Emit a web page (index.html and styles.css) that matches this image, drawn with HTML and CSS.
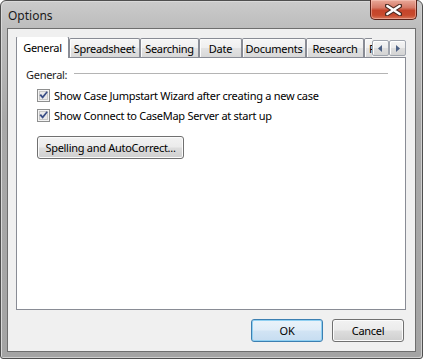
FILE: index.html
```html
<!DOCTYPE html>
<html>
<head>
<meta charset="utf-8">
<title>Options</title>
<link rel="stylesheet" href="styles.css">
</head>
<body>
<div class="window">
  <div class="titlebar">
    <span class="title">Options</span>
    <div class="close">
      <svg width="17" height="12" viewBox="0 0 17 12">
        <path d="M2 1.8 L15 10.2 M15 1.8 L2 10.2" stroke="#4a2a22" stroke-width="4.4" stroke-linecap="round" fill="none"/>
        <path d="M2.3 2 L14.7 10 M14.7 2 L2.3 10" stroke="#ffffff" stroke-width="2.4" stroke-linecap="round" fill="none"/>
      </svg>
    </div>
  </div>
  <div class="client">
    <div class="tabrow">
      <div class="strip">
        <div class="tab selected t-general">General</div>
        <div class="tab t-spread">Spreadsheet</div>
        <div class="tab t-search">Searching</div>
        <div class="tab t-date">Date</div>
        <div class="tab t-docs">Documents</div>
        <div class="tab t-research">Research</div>
        <div class="tab t-f">F</div>
      </div>
      <div class="scroller">
        <div class="sbtn">
          <svg width="5" height="7" viewBox="0 0 5 7"><path d="M4 0 L0 3.5 L4 7 Z" fill="#4d6185"/></svg>
        </div>
        <div class="sbtn">
          <svg width="5" height="7" viewBox="0 0 5 7"><path d="M1 0 L5 3.5 L1 7 Z" fill="#4d6185"/></svg>
        </div>
      </div>
    </div>
    <div class="panel">
      <div class="group">
        <span class="group-label">General:</span>
        <div class="rule"></div>
      </div>
      <div class="check first">
        <svg class="box" width="13" height="13" viewBox="0 0 13 13">
          <rect x="0.5" y="0.5" width="12" height="12" fill="#f4f4f4" stroke="#8e8f8f"/>
          <rect x="2.5" y="2.5" width="8" height="8" fill="#e9e9e9" stroke="#c8c8c8"/>
          <path d="M2.5 6.2 L4 5 L5.6 7 L9.6 2.2 L10.8 3.2 L5.7 9.8 Z" fill="#3a4e86"/>
        </svg>
        <span>Show Case Jumpstart Wizard after creating a new case</span>
      </div>
      <div class="check">
        <svg class="box" width="13" height="13" viewBox="0 0 13 13">
          <rect x="0.5" y="0.5" width="12" height="12" fill="#f4f4f4" stroke="#8e8f8f"/>
          <rect x="2.5" y="2.5" width="8" height="8" fill="#e9e9e9" stroke="#c8c8c8"/>
          <path d="M2.5 6.2 L4 5 L5.6 7 L9.6 2.2 L10.8 3.2 L5.7 9.8 Z" fill="#3a4e86"/>
        </svg>
        <span>Show Connect to CaseMap Server at start up</span>
      </div>
      <div class="btn spelling">Spelling and AutoCorrect...</div>
    </div>
    <div class="footer">
      <div class="btn default">OK</div>
      <div class="btn">Cancel</div>
    </div>
  </div>
</div>
</body>
</html>
```
FILE: styles.css
```css
* { box-sizing: border-box; }
html, body { margin: 0; padding: 0; background: #ffffff; }
body {
  font-family: "Noto Sans", "Open Sans", "DejaVu Sans", sans-serif;
  font-size: 11px;
  letter-spacing: -0.28px;
  color: #000;
}
.window {
  width: 423px;
  height: 359px;
  border: 1px solid #4f4f4f;
  border-radius: 6px 6px 3px 3px;
  background: linear-gradient(to bottom, #cbcbcb 0px, #bcbcbc 28px, #a9a9a9 120px, #a4a4a4 100%);
  box-shadow: inset 1px 1px 0 #d9d9d9, inset -1px -1px 0 #d0d0d0;
  padding: 0 6px 6px 6px;
  display: flex;
  flex-direction: column;
}
.titlebar {
  height: 27px;
  flex: 0 0 27px;
  display: flex;
  justify-content: space-between;
  align-items: flex-start;
}
.title {
  font-size: 12px;
  letter-spacing: 0;
  color: #1a1a1a;
  margin-top: 6px;
  margin-left: 1px;
}
.close {
  width: 47px;
  height: 20px;
  margin-top: -1px;
  margin-right: -1px;
  border: 1px solid #5b2219;
  border-top: none;
  border-radius: 0 0 5px 5px;
  background: linear-gradient(to bottom, #e9a999 0%, #d67a67 40%, #c5452b 55%, #c84a2d 80%, #d9785c 100%);
  box-shadow: inset 0 0 0 1px rgba(255,210,200,0.45);
  display: flex;
  align-items: center;
  justify-content: center;
}
.client {
  flex: 1;
  background: #f0f0f0;
  border: 1px solid #6e6e6e;
  padding: 8px 9px 0 8px;
  display: flex;
  flex-direction: column;
}
.tabrow {
  display: flex;
  height: 21px;
  flex: 0 0 21px;
  position: relative;
  z-index: 2;
  margin-bottom: -1px;
}
.strip {
  width: 356px;
  flex: 0 0 356px;
  display: flex;
  align-items: flex-end;
  overflow: hidden;
}
.tab {
  flex: 0 0 auto;
  height: 19px;
  border: 1px solid #898c95;
  border-bottom: none;
  border-radius: 2px 2px 0 0;
  background: linear-gradient(to bottom, #f6f6f6 0%, #efefef 50%, #e3e3e3 51%, #d8d8d8 100%);
  box-shadow: inset 1px 1px 0 #fcfcfc;
  text-align: center;
  line-height: 20px;
  white-space: nowrap;
  margin-bottom: 1px;
}
.tab.selected {
  height: 22px;
  background: #ffffff;
  box-shadow: none;
  line-height: 22px;
  margin-bottom: 0;
}
.t-general { width: 53px; }
.t-spread { width: 71px; }
.t-search { width: 59px; }
.t-date { width: 43px; }
.t-docs { width: 64px; }
.t-research { width: 58px; }
.t-f { width: 40px; text-align: left; padding-left: 4px; }
.scroller {
  display: flex;
  align-items: flex-start;
  padding-top: 3px;
}
.sbtn {
  width: 17px;
  height: 16px;
  border: 1px solid #a0a5ae;
  border-radius: 2px;
  background: linear-gradient(to bottom, #f5f5f5 0%, #ececec 50%, #dedede 51%, #d4d4d4 100%);
  box-shadow: inset 1px 1px 0 #ffffff;
  display: flex;
  align-items: center;
  justify-content: center;
}
.panel {
  height: 253px;
  flex: 0 0 253px;
  width: 390px;
  background: #ffffff;
  border: 1px solid #898c95;
  padding: 9px 17px 0 9px;
  display: flex;
  flex-direction: column;
  align-items: flex-start;
}
.group {
  display: flex;
  align-items: center;
  height: 14px;
  width: 100%;
}
.group-label {
  color: #1e1e1e;
}
.rule {
  flex: 1;
  margin-left: 7px;
  height: 2px;
  border-top: 1px solid #b4b4b4;
  border-bottom: 1px solid #ffffff;
}
.check {
  display: flex;
  align-items: center;
  height: 20px;
  margin-left: 11px;
}
.check.first { margin-top: 4px; }
.check .box { margin-right: 4px; flex: 0 0 13px; }
.btn {
  height: 23px;
  border: 1px solid #707070;
  border-radius: 3px;
  background: linear-gradient(to bottom, #f2f2f2 0%, #ebebeb 48%, #dddddd 52%, #cfcfcf 100%);
  box-shadow: inset 0 0 0 1px #fbfbfb;
  display: flex;
  align-items: center;
  justify-content: center;
  white-space: nowrap;
}
.spelling {
  margin-top: 11px;
  margin-left: 11px;
  width: 147px;
}
.footer {
  display: flex;
  justify-content: flex-end;
  gap: 9px;
  padding-top: 9px;
  padding-right: 2px;
}
.footer .btn { width: 72px; }
.btn.default {
  border-color: #3c7fb1;
  background: linear-gradient(to bottom, #eaf3fa 0%, #e0edf8 48%, #d2e4f4 52%, #c6ddf1 100%);
  box-shadow: inset 0 0 0 1px #8fd0f2;
}
```
